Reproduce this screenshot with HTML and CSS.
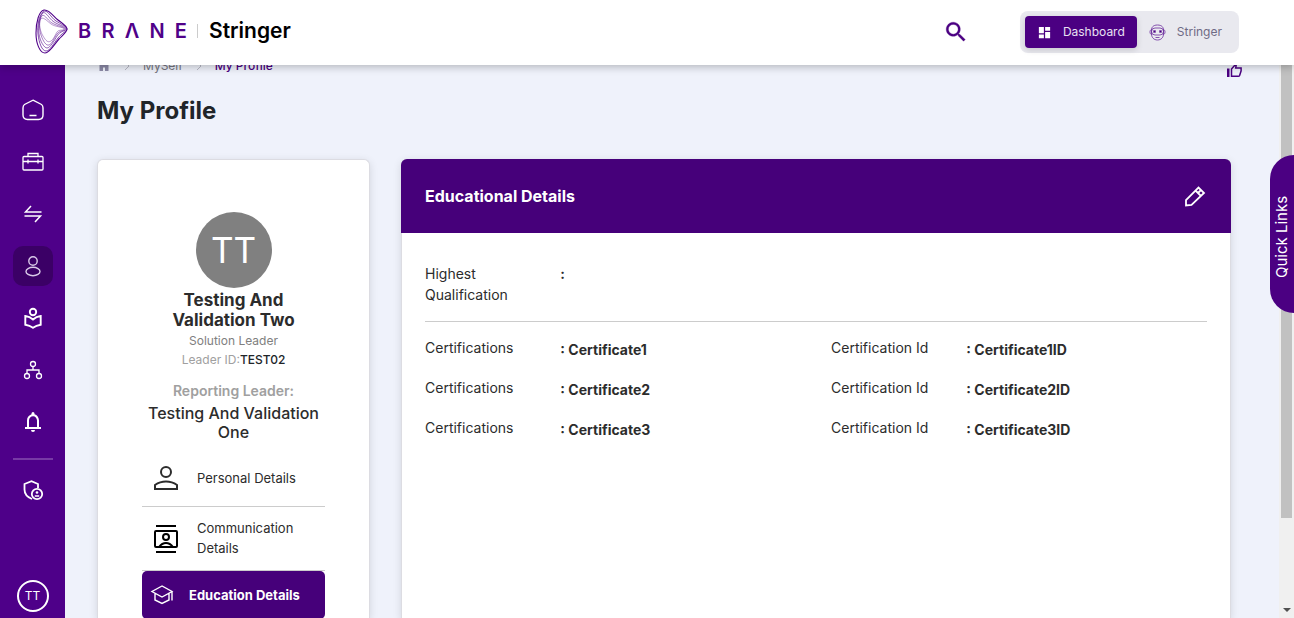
FILE: index.html
```html
<!DOCTYPE html>
<html lang="en">
<head>
<meta charset="utf-8">
<title>My Profile</title>
<link rel="stylesheet" href="styles.css">
</head>
<body>
<header class="topbar">
  <div class="brand">
    <svg class="brand-mark" width="34" height="46" viewBox="0 0 34 46" fill="none" stroke="#500189">
      <path d="M9 1C4 2 1 13 1 24s4 20 9 20 10-10 14-14 8-7 8-10-5-6-9-9S14 0 9 1z" stroke-width="1.100"/>
      <path d="M8 3C4 7 2 16 3 25s4 17 8 17 8-8 12-13 9-7 9-9-6-5-11-8S12-1 8 3z" stroke-width=".7"/>
      <path d="M7 5C4 10 3 18 4 25s5 14 8 14 7-7 10-12 9-5 9-7-7-4-12-7S10 0 7 5z" stroke-width=".6"/>
      <path d="M6 8C4 13 4 20 6 26s5 11 8 10 5-7 8-11 8-3 8-5-8-3-13-6S9 3 6 8z" stroke-width=".5"/>
      <path d="M5 11c-1 5 0 11 3 16s5 7 8 5 4-6 6-9 7-1 7-3-9-2-13-5S7 6 5 11z" stroke-width=".4"/>
    </svg>
    <div class="brand-text">
      <span class="brand-name"><span>B</span><span>R</span><span>Λ</span><span>N</span><span>E</span></span>
      <span class="brand-rule"></span>
      <span class="brand-product">Stringer</span>
    </div>
  </div>
  <button class="search" aria-label="Search">
    <svg width="26" height="26" viewBox="0 0 24 24" fill="currentColor"><path d="M15.500 14h-.8l-.3-.3A6.500 6.500 0 1 0 13.700 14.400l.3.300v.8l5 5 1.500-1.500zM9.500 14a4.500 4.500 0 1 1 0-9 4.500 4.500 0 0 1 0 9z" stroke="currentColor" stroke-width=".3"/></svg>
  </button>
  <div class="switcher">
    <button class="switch switch-on">
      <svg width="15" height="15" viewBox="0 0 24 24" fill="#fff"><path d="M3 13h8V3H3zm0 8h8v-6H3zm10 0h8V11h-8zm0-18v6h8V3z"/></svg>
      <span>Dashboard</span>
    </button>
    <button class="switch">
      <svg width="17" height="17" viewBox="0 0 17 17" fill="none" stroke="#6a2a9c" stroke-width=".8"><path d="M8.500 1C4 1 2.500 3.500 2.500 6v4c0 3 2 6 6 6s6-3 6-6V6c0-2.500-1.500-5-6-5z"/><rect x="2.500" y="4" width="12" height="7" rx="3.500"/><path d="M2.500 5.500c-2 .5-2 4.500 0 5M14.500 5.500c2 .5 2 4.500 0 5M6.500 13.500h4"/><path d="M4.500 6.500h2v2h-2zM10.500 6.500h2v2h-2z" fill="#4b0082" stroke-width=".4"/></svg>
      <span>Stringer</span>
    </button>
  </div>
</header>

<div class="shell">
  <nav class="sidebar" aria-label="Main">
    <a class="nav-item" href="#" aria-label="Home"><svg width="24" height="24" viewBox="0 0 24 24" fill="none" stroke="currentColor" stroke-width="1.400"><path d="M12 2.200 20.500 6.500Q22 7.500 22 10v7q0 4.500-4.500 4.500h-11Q2 21.500 2 17v-7q0-2.500 1.500-3.500zM8.500 17.500h7"/></svg></a>
    <a class="nav-item" href="#" aria-label="Work"><svg width="24" height="24" viewBox="0 0 24 24" fill="none" stroke="currentColor" stroke-width="1.300"><rect x="2" y="6.500" width="20" height="13.500" rx="1"/><path d="M7 6.500v-3h10v3M2 11.500h20M7 9.500v4M17 9.500v4"/></svg></a>
    <a class="nav-item" href="#" aria-label="Transfers"><svg width="24" height="24" viewBox="0 0 24 24" fill="none" stroke="currentColor" stroke-width="1.500"><path d="M20.500 10h-16l5.500-6M3.500 14h16l-5.500 6"/></svg></a>
    <a class="nav-item nav-on" href="#" aria-label="Profile" aria-current="page"><svg width="24" height="24" viewBox="0 0 24 24" fill="none" stroke="currentColor" stroke-width="1.400"><circle cx="12" cy="7" r="4.200"/><ellipse cx="12" cy="17.500" rx="7" ry="4.200"/></svg></a>
    <a class="nav-item" href="#" aria-label="Learning"><svg width="24" height="24" viewBox="0 0 24 24" fill="none" stroke="currentColor" stroke-width="1.900"><circle cx="12" cy="6" r="3.200"/><path d="M4.300 10q4.500.5 7.700 3.500Q15.200 10.500 19.700 10v8.800q-4.500.7-7.700 3-3.200-2.300-7.700-3z"/></svg></a>
    <a class="nav-item" href="#" aria-label="Organisation"><svg width="24" height="24" viewBox="0 0 24 24" fill="none" stroke="currentColor" stroke-width="1.300"><circle cx="12" cy="6" r="2.500"/><circle cx="6" cy="18" r="2.500"/><circle cx="18" cy="18" r="2.500"/><path d="M12 8.500V12M6 15.500V12h12v3.500"/></svg></a>
    <a class="nav-item" href="#" aria-label="Notifications"><svg width="24" height="24" viewBox="0 0 24 24" fill="currentColor"><path fill-rule="evenodd" d="M4 19v-2h2V10.500q0-2.200 1.300-3.900T10.500 4.300V3.500q0-1.500 1.500-1.500t1.500 1.500v.8q2 .5 3.200 2.300T18 10.500V17h2v2zM12 22q-2 0-2-2h4q0 2-2 2zM8 17h8v-6.500q0-1.900-1.200-3.100T12 6.300 9.200 7.400 8 10.500z"/></svg></a>
    <hr class="nav-rule">
    <a class="nav-item" href="#" aria-label="Admin"><svg width="24" height="24" viewBox="0 0 24 24" fill="none" stroke="currentColor" stroke-width="1.800"><path d="M11 21Q3.500 18 3.500 11.500V6L10.500 3.200 17 6v4"/><circle cx="16" cy="16" r="5.200"/><circle cx="16" cy="14.500" r="1.300" fill="currentColor" stroke="none"/><path d="M13.800 18h4.400" stroke-width="1.500"/></svg></a>
    <button class="me">TT</button>
  </nav>

  <main class="page">
    <div class="crumb-row">
      <nav class="crumbs" aria-label="Breadcrumb">
        <a href="#" aria-label="Home"><svg width="14" height="14" viewBox="0 0 14 14" fill="#8d8ba8"><path d="M7 0 1 5.500h1.500V12H6V8.500h2V12h3.500V5.500H13z"/></svg></a>
        <svg width="6" height="10" viewBox="0 0 6 10" fill="none" stroke="#b9b9c6"><path d="m1 1 4 4-4 4"/></svg>
        <a href="#">MySelf</a>
        <svg width="6" height="10" viewBox="0 0 6 10" fill="none" stroke="#b9b9c6"><path d="m1 1 4 4-4 4"/></svg>
        <a class="crumb-on" href="#" aria-current="page">My Profile</a>
      </nav>
      <button class="like" aria-label="Like"><svg width="16" height="18" viewBox="0 0 16 18" fill="none" stroke="#4b0082" stroke-width="1.500"><path d="M5.500 14.200h6.800q1 0 1.300-.8l1.500-4.500V6H9.700l.8-4.700L5.500 7z"/><path d="M1 6.500h2.500V15H1z" fill="#4b0082" stroke="none"/></svg></button>
    </div>
    <h1 class="title">My Profile</h1>

    <div class="columns">
      <section class="card person">
        <div class="avatar">TT</div>
        <h2 class="person-name">Testing And Validation Two</h2>
        <p class="role">Solution Leader</p>
        <p class="leader-id">Leader ID:<span>TEST02</span></p>
        <p class="reports">Reporting Leader:</p>
        <p class="reports-name">Testing And Validation One</p>
        <div class="tabs">
          <a class="tab" href="#">
            <svg width="32" height="32" viewBox="0 0 32 32" fill="none" stroke="#2c2c2c" stroke-width="2"><circle cx="16" cy="10" r="5"/><path d="M5 27v-4Q10 19.500 16 19.500t11 3.500v4z"/></svg>
            <span>Personal Details</span>
          </a>
          <a class="tab" href="#">
            <svg width="32" height="32" viewBox="0 0 32 32" fill="none" stroke="#000" stroke-width="2"><path d="M6 4h20M6 30h20"/><rect x="5" y="9" width="22" height="16" rx="1"/><circle cx="16" cy="15" r="3"/><path d="M9 25q3-4 7-4t7 4"/></svg>
            <span>Communication Details</span>
          </a>
          <a class="tab tab-on" href="#" aria-current="true">
            <svg width="24" height="24" viewBox="0 0 24 24" fill="none" stroke="currentColor" stroke-width="1.400"><path d="M12 3 2 8.500 12 14l10-5.500zM5 10.500v6.500l7 3.500 7-3.500v-6.500M22 8.500v9"/></svg>
            <span>Education Details</span>
          </a>
        </div>
      </section>

      <section class="card details">
        <header class="details-head">
          <h2>Educational Details</h2>
          <button class="edit" aria-label="Edit"><svg width="24" height="24" viewBox="0 0 24 24" fill="none" stroke="currentColor" stroke-width="1.800"><path d="M3 21.500v-5.500L15.500 3.500l5.500 5.500L8.500 21zM12.500 6.500l5.500 5.500M15 9l2.500-2.500"/></svg></button>
        </header>
        <div class="details-body">
          <dl class="fields fields-top">
            <div class="field"><dt>Highest Qualification</dt><dd>:</dd></div>
          </dl>
          <dl class="fields">
            <div class="field"><dt>Certifications</dt><dd class="low">: Certificate1</dd></div>
            <div class="field"><dt>Certification Id</dt><dd class="low">: Certificate1ID</dd></div>
            <div class="field"><dt>Certifications</dt><dd class="low">: Certificate2</dd></div>
            <div class="field"><dt>Certification Id</dt><dd class="low">: Certificate2ID</dd></div>
            <div class="field"><dt>Certifications</dt><dd class="low">: Certificate3</dd></div>
            <div class="field"><dt>Certification Id</dt><dd class="low">: Certificate3ID</dd></div>
          </dl>
        </div>
      </section>
    </div>
  </main>

  <div class="scroll-track" aria-hidden="true">
    <div class="scroll-thumb"></div>
    <svg class="scroll-arrow" width="8" height="4" viewBox="0 0 8 4" fill="#505050"><path d="M0 0h8L4 4z"/></svg>
  </div>
</div>
<button class="quick">Quick Links</button>
</body>
</html>
```

FILE: styles.css
```css
* { box-sizing: border-box; }
body {
  margin: 0;
  height: 100vh;
  display: flex;
  flex-direction: column;
  overflow: hidden;
  background: #eff2fb;
  color: #2c2c2c;
  font: 14px/20px Inter, sans-serif;
}
h1, h2, p, dl, dd { margin: 0; }
a { color: inherit; text-decoration: none; }
button {
  border: 0;
  padding: 0;
  background: none;
  font: inherit;
  color: inherit;
  cursor: pointer;
}
svg { display: block; flex: none; }

.topbar {
  flex: none;
  position: relative;
  z-index: 2;
  height: 65px;
  display: flex;
  align-items: center;
  padding: 0 55px 1px 35px;
  background: #fff;
  box-shadow: 0 2px 8px rgba(0, 0, 0, .25);
}
.brand { display: flex; align-items: center; flex: 1; }
.brand-text { display: flex; align-items: center; padding-bottom: 3px; }
.brand-name {
  width: 109px;
  margin-left: 9px;
  display: flex;
  justify-content: space-between;
  color: #500189;
  font-size: 20px;
  font-weight: 600;
}
.brand-rule { width: 1px; height: 14px; margin: 0 11px 0 10px; background: #ccc; }
.brand-product { color: #000; font-size: 21px; font-weight: 600; }
.search { margin-right: 51px; color: #4b0082; }
.switcher { display: flex; padding: 5px; border-radius: 8px; background: #e9e9ef; }
.switch {
  display: flex;
  align-items: center;
  gap: 11px;
  height: 32px;
  padding: 0 12px;
  border-radius: 4px;
  color: #6f6b85;
  font-size: 12px;
}
.switch-on { background: #4b0082; color: #e9e0f2; box-shadow: 0 2px 6px rgba(0, 0, 0, .15); }

.shell { flex: 1; min-height: 0; display: flex; }
.sidebar {
  flex: none;
  width: 65px;
  display: flex;
  flex-direction: column;
  align-items: center;
  gap: 12px;
  padding: 25px 0 6px;
  background: #4e0089;
  color: #fff;
}
.nav-item {
  flex: none;
  width: 40px;
  height: 40px;
  display: grid;
  place-items: center;
  border-radius: 10px;
}
.nav-on { background: #3b0066; color: #d9c9e8; }
.nav-rule { flex: none; width: 40px; height: 2px; margin: 4px 0 -2px; border: 0; background: #773aa5; }
.me {
  flex: none;
  width: 32px;
  height: 32px;
  margin-top: auto;
  border: 2px solid #fff;
  border-radius: 50%;
  font-size: 12px;
}

.page {
  flex: 1;
  min-width: 0;
  overflow: hidden;
  display: flex;
  flex-direction: column;
  padding: 0 48px 0 32px;
}
.crumb-row {
  flex: none;
  display: flex;
  justify-content: space-between;
  align-items: center;
  height: 20px;
  margin: -9px -12px 19px 0;
}
.crumbs { display: flex; align-items: center; gap: 13px; color: #75757f; font-size: 12px; }
.crumb-on { color: #4b0082; font-weight: 500; }
.like { padding: 10px 1px 0 0; }
.title { flex: none; font-size: 24px; line-height: 32px; color: #212529; font-weight: 700; }

.columns {
  flex: 1;
  min-height: 0;
  display: grid;
  grid-template-columns: 273fr 830fr;
  gap: 31px;
  padding-top: 32px;
}
.card {
  border: 1px solid #dcdce2;
  border-bottom: 0;
  border-radius: 6px 6px 0 0;
  background: #fff;
  box-shadow: 0 2px 8px rgba(0, 0, 0, .12);
}
.person { padding: 52px 44px 0; text-align: center; }
.avatar {
  width: 76px;
  height: 76px;
  margin: 0 auto 2px;
  border-radius: 50%;
  background: #808080;
  color: #fff;
  font-size: 35px;
  line-height: 76px;
}
.person-name { font-size: 17px; line-height: 20px; font-weight: 700; }
.role { margin-top: 1px; color: #808080; font-size: 12px; line-height: 19px; }
.leader-id { color: #a0a0a0; font-size: 12px; line-height: 19px; }
.leader-id span { color: #212529; font-weight: 500; }
.reports { margin-top: 12px; color: #a0a0a0; font-size: 14px; font-weight: 600; }
.reports-name { margin-top: 3px; font-size: 16px; line-height: 19px; font-weight: 500; }
.tabs { margin-top: 8px; text-align: left; }
.tab {
  display: flex;
  align-items: center;
  gap: 15px;
  min-height: 57px;
  padding: 11px 8px 12px;
  border-bottom: 1px solid #ccc;
  font-size: 13px;
}
.tab-on {
  min-height: 48px;
  border: 0;
  border-radius: 5px;
  background: #46007a;
  color: #fff;
  font-weight: 700;
}

.details-head {
  display: flex;
  align-items: center;
  justify-content: space-between;
  height: 74px;
  margin: -1px -1px 0;
  padding: 0 24px;
  border-radius: 6px 6px 0 0;
  background: #46007a;
  color: #fff;
}
.details-head h2 { font-size: 16px; font-weight: 700; }
.details-body { padding: 30px 23px 0; }
.fields { display: grid; grid-template-columns: 1fr 1fr; column-gap: 30px; }
.fields-top { padding-bottom: 16px; margin-bottom: 15px; border-bottom: 1px solid #ccc; }
.field {
  display: grid;
  grid-template-columns: 36% 1fr;
  min-height: 40px;
  line-height: 21px;
}
dd { font-weight: 700; }
.low { padding-top: 2px; }

.scroll-track {
  flex: none;
  width: 15px;
  display: flex;
  flex-direction: column;
  align-items: center;
  background: #f0f0f0;
}
.scroll-thumb { flex: 0 0 82%; width: 11px; background: #c1c1c1; }
.scroll-arrow { margin: auto 0 6px; }
.quick {
  position: absolute;
  right: 0;
  top: 155px;
  width: 24px;
  height: 158px;
  padding-bottom: 6px;
  border-radius: 0 24px 24px 0;
  background: #4b0082;
  color: #fff;
  writing-mode: vertical-rl;
  rotate: 180deg;
  font-size: 15px;
  line-height: 24px;
  text-align: center;
}
```
